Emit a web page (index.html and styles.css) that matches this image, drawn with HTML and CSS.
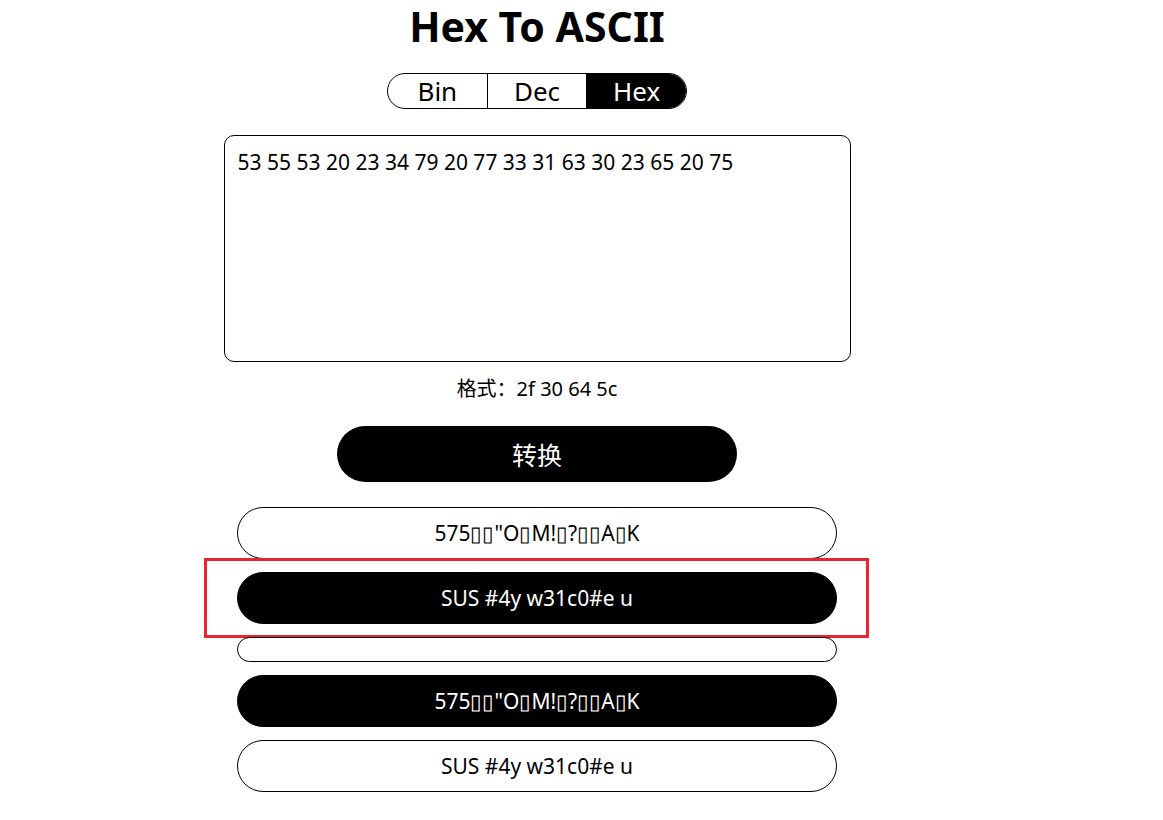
FILE: index.html
```html
<!DOCTYPE html>
<html lang="zh">
<head>
<meta charset="utf-8">
<title>Hex To ASCII</title>
<link rel="stylesheet" href="styles.css">
</head>
<body>
<main class="page">
  <h1 class="title">Hex To ASCII</h1>
  <div class="toggle">
    <span class="seg">Bin</span>
    <span class="seg">Dec</span>
    <span class="seg active">Hex</span>
  </div>
  <textarea class="input">53 55 53 20 23 34 79 20 77 33 31 63 30 23 65 20 75</textarea>
  <p class="hint">格式：2f 30 64 5c</p>
  <button class="convert">转换</button>
  <div class="results">
    <div class="row"><span>575▯▯"O▯M!▯?▯▯A▯K</span></div>
    <div class="row dark"><span>SUS #4y w31c0#e u</span><span class="mark"></span></div>
    <div class="row empty"></div>
    <div class="row dark"><span>575▯▯"O▯M!▯?▯▯A▯K</span></div>
    <div class="row"><span>SUS #4y w31c0#e u</span></div>
  </div>
</main>
</body>
</html>
```

FILE: styles.css
```css
html, body {
  margin: 0;
  padding: 0;
  background: #fff;
}
body {
  font-family: "Noto Sans", "Noto Sans CJK SC", sans-serif;
  color: #000;
}
.page {
  width: 1074px;
  padding-top: 2px;
  display: flex;
  flex-direction: column;
  align-items: center;
}
.title {
  margin: 0;
  font-size: 41px;
  font-weight: 700;
  line-height: 48px;
  letter-spacing: 0;
}
.toggle {
  margin-top: 23px;
  display: flex;
  width: 300px;
  height: 36px;
  box-sizing: border-box;
  border: 1px solid #000;
  border-radius: 18px;
  overflow: hidden;
}
.seg {
  flex: 1;
  display: flex;
  align-items: center;
  justify-content: center;
  font-size: 26px;
  line-height: 1;
}
.seg + .seg {
  border-left: 1px solid #000;
}
.seg.active {
  background: #000;
  color: #fff;
}
.input {
  margin-top: 26px;
  width: 627px;
  height: 227px;
  box-sizing: border-box;
  border: 1px solid #000;
  border-radius: 10px;
  padding: 12px 13px;
  font-family: "Noto Sans", sans-serif;
  font-size: 21px;
  line-height: 28px;
  resize: none;
  outline: none;
  color: #000;
}
.hint {
  margin: 12px 0 0;
  font-size: 20px;
  line-height: 30px;
}
.convert {
  margin-top: 22px;
  width: 400px;
  height: 56px;
  border: none;
  border-radius: 28px;
  background: #000;
  color: #fff;
  font-family: "Noto Sans", "Noto Sans CJK SC", sans-serif;
  font-size: 25px;
}
.results {
  margin-top: 25px;
  display: flex;
  flex-direction: column;
  gap: 13px;
  width: 600px;
}
.row {
  position: relative;
  height: 52px;
  box-sizing: border-box;
  border: 1px solid #000;
  border-radius: 26px;
  display: flex;
  align-items: center;
  justify-content: center;
  font-size: 21px;
}
.row.dark {
  background: #000;
  color: #fff;
}
.row.empty {
  height: 25px;
  border-radius: 13px;
}
.mark {
  position: absolute;
  left: -34px;
  right: -33px;
  top: -15px;
  bottom: -15px;
  border: 3px solid #e8242e;
  box-sizing: border-box;
}
```
